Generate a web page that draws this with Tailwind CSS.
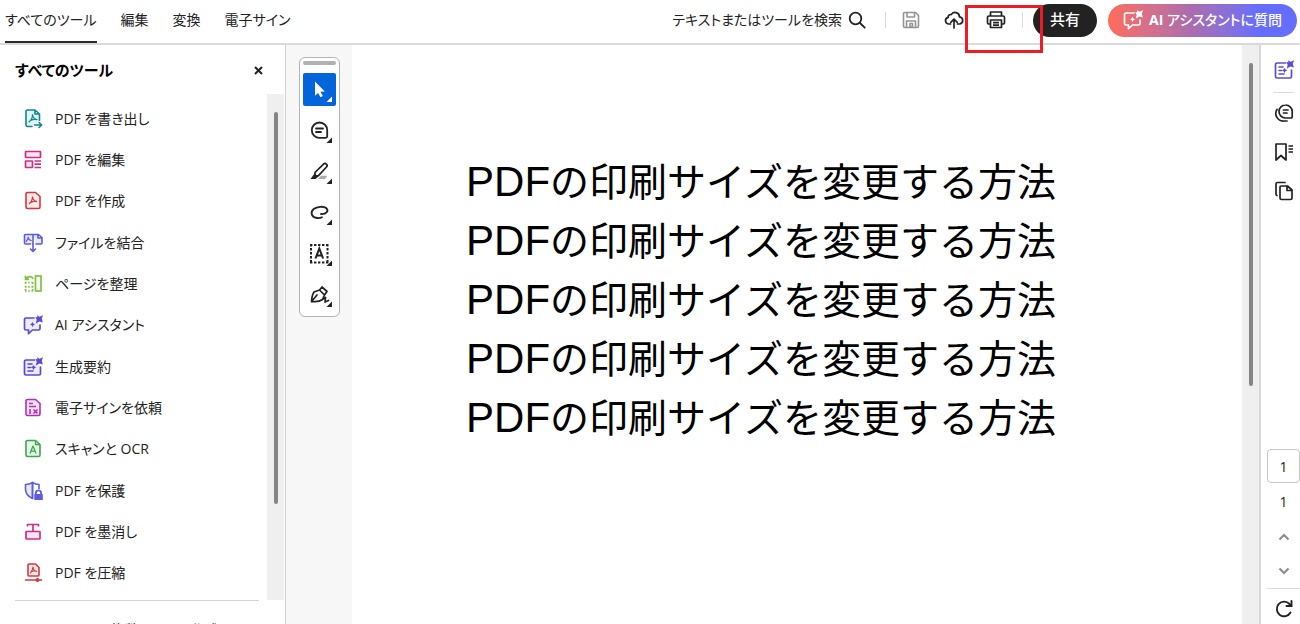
<!DOCTYPE html>
<html lang="ja">
<head>
    <meta charset="UTF-8">
    <meta name="viewport" content="width=device-width, initial-scale=1.0">
    <title>PDFの印刷サイズを変更する方法</title>
    <script src="https://cdn.jsdelivr.net/npm/@tailwindcss/browser@4"></script>
</head>
<body class="h-screen flex flex-col overflow-hidden bg-white text-[#222] text-sm font-['Open_Sans','Noto_Sans_CJK_JP',sans-serif] [font-feature-settings:'palt']">

    <!-- Shared icons -->
    <svg class="hidden">
        <symbol id="i-acro" viewBox="0 0 20 20">
            <path fill="none" stroke="currentColor" stroke-width="1.2" stroke-linejoin="round" d="M9.500 5.500c.2 2.500 1.500 4.500 4.500 5.200M9.500 5.500c0 3-1 5.500-3.500 7.500M7.500 11.500c2-1 4.300-1.300 6.500-.8"/>
        </symbol>
        <symbol id="i-summary" viewBox="0 0 20 20">
            <path fill="var(--tint,none)" stroke="currentColor" stroke-width="1.700" stroke-linecap="round" d="M11.500 3H3a1.500 1.500 0 0 0-1.500 1.500v12A1.500 1.500 0 0 0 3 18h13a1.500 1.500 0 0 0 1.500-1.500V10"/>
            <path fill="none" stroke="currentColor" stroke-width="1.600" stroke-linecap="round" d="M5 7h4M5 10.500h2.500M5 14h5"/>
            <path fill="currentColor" d="M14.200.3l2.300 1.400L20 .2l-1.200 3.500 1 3.800-3.300-1L12.800 8.500l.9-3.800L12.300 2l2 .3zM10.500 8l1 1.500 1.800.8-1.800 1-1 1.700-1-1.700-1.800-1 1.800-.8z"/>
        </symbol>
        <symbol id="i-chat" viewBox="0 0 20 20">
            <path fill="var(--tint,none)" stroke="currentColor" stroke-width="1.700" stroke-linecap="round" stroke-linejoin="round" d="M11 3H3a1.500 1.500 0 0 0-1.500 1.500v9A1.500 1.500 0 0 0 3 15h2.500v3.700L9.500 15H15.500a1.500 1.500 0 0 0 1.500-1.500V10"/>
            <path fill="currentColor" d="M14.200.3l2.300 1.400L20 .2l-1.200 3.500 1 3.800-3.300-1L12.800 8.500l.9-3.800L12.300 2l2 .3zM9.500 7l.9 1.600 1.600.9-1.600.8-.9 1.700-.9-1.700L7 9.500l1.600-.9z"/>
        </symbol>
    </svg>

    <header class="relative flex items-start justify-between h-[45px] shrink-0 border-b-2 border-[#dadada] pl-[5px] pr-[3px]">
        <nav class="flex gap-6 h-full">
            <a href="#" class="border-b-2 border-[#2c2c2c] h-[43px] leading-10">すべてのツール</a>
            <a href="#" class="leading-10">編集</a>
            <a href="#" class="leading-10">変換</a>
            <a href="#" class="leading-10">電子サイン</a>
        </nav>
        <div class="flex items-center h-10">
            <button class="flex items-center gap-[6px]">テキストまたはツールを検索
                <svg class="size-[18px]" viewBox="0 0 18 18" fill="none" stroke="currentColor" stroke-width="1.800" stroke-linecap="round"><circle cx="7.500" cy="7.500" r="5.800"/><path d="M12 12l4.700 4.700"/></svg>
            </button>
            <span class="w-px h-4 bg-[#dadada] ml-[19px] mr-4"></span>
            <button aria-label="保存" class="text-[#959595]">
                <svg class="size-[18px]" viewBox="0 0 18 18" fill="none" stroke="currentColor" stroke-width="1.600" stroke-linejoin="round"><path d="M2.500 1.500h11l3 3v10.500a1.500 1.500 0 0 1-1.500 1.500H3A1.500 1.500 0 0 1 1.500 15V2.500a1 1 0 0 1 1-1z"/><path d="M5 1.500v4.500h7.500V1.500M4.500 16.500V10h9v6.500M8 12.500h2.500v3H8z"/></svg>
            </button>
            <button aria-label="アップロード" class="ml-6">
                <svg class="size-5" viewBox="0 0 20 20" fill="none" stroke="currentColor" stroke-width="1.700" stroke-linecap="round" stroke-linejoin="round"><path d="M6.500 14H4.500a3.400 3.400 0 0 1-.3-6.700 2.400 2.400 0 0 1 3-2.700 4.500 4.500 0 0 1 8.300 2.300 3.600 3.600 0 0 1 .3 7.100H13.500M10 18V9.500M6.800 12.300L10 9l3.200 3.300"/></svg>
            </button>
            <button aria-label="印刷" class="ml-[22px]">
                <svg class="size-5" viewBox="0 0 20 20" fill="none" stroke="currentColor" stroke-width="1.700" stroke-linejoin="round"><path d="M4.500 6V2h11v4M4.500 14H3a1.500 1.500 0 0 1-1.500-1.500v-5A1.500 1.500 0 0 1 3 6h14a1.500 1.500 0 0 1 1.500 1.500v5A1.500 1.500 0 0 1 17 14h-1.500M4.500 10h11v7.500h-11zM7 12.700h6M7 15.200h6"/></svg>
            </button>
            <span class="w-px h-4 bg-[#dadada] ml-4 mr-[10px]"></span>
            <button class="h-[33px] w-16 rounded-full bg-[#222] text-white text-[15px] font-medium">共有</button>
            <button class="flex items-center justify-center gap-[6px] h-[33px] w-[189px] ml-[11px] rounded-full bg-linear-to-r from-[#ff6b58] via-[#a96cb0] via-45% to-[#656dff] to-80% text-white text-sm font-medium">
                <svg class="size-5"><use href="#i-chat"/></svg>
                <span><b>AI</b> アシスタントに質問</span>
            </button>
        </div>
        <!-- Highlight around the print button -->
        <div class="absolute right-[257px] top-[5px] w-[78px] h-12 border-[3px] border-[#ed1c24] z-10"></div>
    </header>

    <div class="flex flex-1 min-h-0">
        <aside class="w-[286px] shrink-0 border-r border-[#d0d0d0] flex flex-col overflow-hidden">
            <div class="flex items-center justify-between h-[49px] shrink-0 pt-[2px] pl-[15px] pr-[22px]">
                <h2 class="text-[15px] font-bold text-black">すべてのツール</h2>
                <button aria-label="閉じる"><svg class="size-[9px]" viewBox="0 0 9 9" stroke="currentColor" stroke-width="2"><path d="M1 1l7 7M8 1L1 8"/></svg></button>
            </div>
            <div class="flex shrink-0">
                <ul class="flex-1 grid auto-rows-fr h-[506px] pt-1 pb-[6px] pl-[23px]">
                    <li class="flex"><a href="#" class="flex items-center gap-3">
                        <svg class="size-5 text-[#12878a]" viewBox="0 0 20 20" fill="none" stroke="currentColor" stroke-width="1.600" stroke-linecap="round" stroke-linejoin="round"><path fill="#e1f3f3" d="M9 17.500H4.500A1.500 1.500 0 0 1 3 16V2.500A1.500 1.500 0 0 1 4.500 1H12l4.500 4v6.500M12 1.500V5h4"/><use href="#i-acro"/><path d="M11.500 16h7M16 13.500l2.700 2.500-2.700 2.500"/></svg>PDF を書き出し</a></li>
                    <li class="flex"><a href="#" class="flex items-center gap-3">
                        <svg class="size-5 text-[#d22d86]" viewBox="0 0 20 20" fill="#fbe6f1" stroke="currentColor" stroke-width="1.700"><rect x="2.500" y="1.500" width="15" height="6" rx=".5"/><rect x="2.500" y="11" width="7" height="6.500" rx=".5"/><path d="M11.500 11h6.500M11.500 14.200h6.500M11.500 17.500h6.500"/></svg>PDF を編集</a></li>
                    <li class="flex"><a href="#" class="flex items-center gap-3">
                        <svg class="size-5 text-[#d7373f]" viewBox="0 0 20 20" fill="none" stroke="currentColor" stroke-width="1.600" stroke-linejoin="round"><path fill="#fdeaea" d="M4.500 1.500h8l4.500 4V16a1.500 1.500 0 0 1-1.500 1.500h-11A1.500 1.500 0 0 1 3 16V3a1.500 1.500 0 0 1 1.500-1.500z"/><use href="#i-acro"/></svg>PDF を作成</a></li>
                    <li class="flex"><a href="#" class="flex items-center gap-3">
                        <svg class="size-5 text-[#5c5ce0]" viewBox="0 0 20 20" fill="none" stroke="currentColor" stroke-width="1.600" stroke-linecap="round" stroke-linejoin="round"><path fill="#e9e9fc" d="M7.500 11H2.500a1 1 0 0 1-1-1V2.500a1 1 0 0 1 1-1H10V11M10 1.500h5.500l3.500 3V10a1 1 0 0 1-1 1h-5M15 1.500V5h4"/><path stroke-width="1.200" d="M5.200 4c.2 2 1.300 3.300 3 3.500M3.300 8.500C4 7 5.500 6 5.200 4"/><path d="M10 11v7.500M7.500 16l2.500 2.500 2.500-2.500"/></svg>ファイルを結合</a></li>
                    <li class="flex"><a href="#" class="flex items-center gap-3">
                        <svg class="size-5 text-[#7cc33f]" viewBox="0 0 20 20" fill="none" stroke="currentColor" stroke-width="1.700"><rect x="12.500" y="2" width="5.500" height="15"/><path d="M10 5C9.500 2.500 6 1.500 3 4.500M2.500 1.500v3.800H6"/><path stroke-dasharray="1.600 1.600" d="M2 8.500h8M2 17h8M2.500 8.500V17M9.700 8.500V17M2 12.800h8"/></svg>ページを整理</a></li>
                    <li class="flex"><a href="#" class="flex items-center gap-3">
                        <svg class="size-5 text-[#5c4bd3] [--tint:#eeebfc]"><use href="#i-chat"/></svg>AI アシスタント</a></li>
                    <li class="flex"><a href="#" class="flex items-center gap-3">
                        <svg class="size-5 text-[#5c4bd3] [--tint:#eeebfc]"><use href="#i-summary"/></svg>生成要約</a></li>
                    <li class="flex"><a href="#" class="flex items-center gap-3">
                        <svg class="size-5 text-[#b52bc1]" viewBox="0 0 20 20" fill="none" stroke="currentColor" stroke-width="1.600" stroke-linejoin="round"><path fill="#f8e6fa" d="M4.500 1.500h8l4.500 4V16a1.500 1.500 0 0 1-1.500 1.500h-11A1.500 1.500 0 0 1 3 16V3a1.500 1.500 0 0 1 1.500-1.500z"/><path d="M6 5.500h4M6 8.500h7M7 11v5M10.500 11.500l4 4M14.500 11.500l-4 4"/></svg>電子サインを依頼</a></li>
                    <li class="flex"><a href="#" class="flex items-center gap-3">
                        <svg class="size-5 text-[#3da74e]" viewBox="0 0 20 20" fill="none" stroke="currentColor" stroke-width="1.600" stroke-linejoin="round"><path fill="#e6f5e8" d="M4.500 1.500h8l4.500 4V16a1.500 1.500 0 0 1-1.500 1.500h-11A1.500 1.500 0 0 1 3 16V3a1.500 1.500 0 0 1 1.500-1.500z"/><path stroke-width="1.300" d="M12.500 1.500V5.500H17M7 14.500l3-7.500 3 7.500M8 12.200h4"/></svg>スキャンと OCR</a></li>
                    <li class="flex"><a href="#" class="flex items-center gap-3">
                        <svg class="size-5 text-[#5c5ce0]" viewBox="0 0 20 20" fill="none" stroke="currentColor" stroke-width="1.600" stroke-linejoin="round"><path fill="#e9e9fc" d="M9.500 17.500C5 15.500 2.500 12 2.500 8V3.500c3 0 5-.7 7-2.200z"/><path d="M9.500 1.300c2 1.500 3.500 2.200 6.500 2.200V8M9.500 1v17"/><path fill="currentColor" stroke="none" d="M12 13v-1a3.500 3.500 0 0 1 7 0v1h.8v6h-8.500v-6zm1.800 0h3.400v-1a1.700 1.700 0 0 0-3.400 0z"/></svg>PDF を保護</a></li>
                    <li class="flex"><a href="#" class="flex items-center gap-3">
                        <svg class="size-5 text-[#d22d86]" viewBox="0 0 20 20" fill="none" stroke="currentColor" stroke-width="1.700" stroke-linejoin="round"><path d="M4.500 4.500V2.500h11v2M10 2.500V9"/><rect x="3" y="9.500" width="14" height="7.500" rx=".5" fill="#fbe6f1"/></svg>PDF を墨消し</a></li>
                    <li class="flex"><a href="#" class="flex items-center gap-3">
                        <svg class="size-5 text-[#d7373f]" viewBox="0 0 20 20" fill="none" stroke="currentColor" stroke-width="1.600" stroke-linecap="round" stroke-linejoin="round"><path fill="#fdeaea" d="M6 1h6.500l3.500 3.500V12a1 1 0 0 1-1 1H6a1 1 0 0 1-1-1V2a1 1 0 0 1 1-1z"/><path stroke-width="1.200" d="M10 4c-.3 2-1 4-2.500 6M10 4c.3 2.500 1.500 4 3.500 4.300M8.500 8.500c1.500-.7 3-1 5-.2"/><path d="M2.500 17h16"/><circle cx="14.500" cy="17" r="2" fill="currentColor" stroke="none"/></svg>PDF を圧縮</a></li>
                </ul>
                <div class="w-[17px] bg-[#efefef] pt-[18px] mr-px flex justify-center items-start"><div class="w-1 h-[392px] rounded-full bg-[#858585]"></div></div>
            </div>
            <div class="ml-[15px] mr-[26px] border-t border-[#d5d5d5] pt-[19px] text-center shrink-0">
                <p class="pl-14 whitespace-nowrap">複数まとめて作成</p>
            </div>
        </aside>

        <div class="w-[66px] shrink-0 bg-[#f7f7f7] pl-[13px] pt-3">
            <div class="w-[41px] h-[260px] border border-[#b4b4b4] rounded-md bg-white flex flex-col items-center pt-[3px]">
                <div class="w-[33px] h-1 rounded-full bg-[#b1b1b1] mb-2 shrink-0"></div>
                <div class="flex flex-col gap-2">
                    <button aria-label="選択" class="size-[33px] rounded-xs bg-[#0265dc] text-white">
                        <svg class="size-[33px]" viewBox="0 0 33 33" fill="currentColor"><path d="M12 8.500v14.200l3-2.800 2.600 4.300 2.200-1.200-2.300-4.200 4.300-.3zM29 23.500V29h-5.500z"/></svg>
                    </button>
                    <button aria-label="コメント" class="size-[33px]">
                        <svg class="size-[33px]" viewBox="0 0 33 33" fill="none" stroke="currentColor" stroke-width="1.800" stroke-linecap="round" stroke-linejoin="round"><path d="M16.500 8.500a7.700 7.700 0 1 0 0 15.400h6a1.700 1.700 0 0 0 1.700-1.700v-6a7.700 7.700 0 0 0-7.700-7.700zM13 14.500h7M13 18h5"/><path fill="currentColor" stroke="none" d="M29 23.500V29h-5.500z"/></svg>
                    </button>
                    <button aria-label="ハイライト" class="size-[33px]">
                        <svg class="size-[33px]" viewBox="0 0 33 33" fill="none" stroke="currentColor" stroke-width="1.700" stroke-linejoin="round"><path fill="#aaa" stroke="none" d="M15 24l3-3.300h6.500L22 24z"/><path d="M12 17.500l8.500-8.300a1.900 1.900 0 0 1 3 2.800L15.500 20.700 12 21z"/><path fill="currentColor" stroke="none" d="M11.500 18.500l4 3L12.500 24H7.500zM29 23.500V29h-5.500z"/></svg>
                    </button>
                    <button aria-label="描画" class="size-[33px]">
                        <svg class="size-[33px]" viewBox="0 0 33 33" fill="none" stroke="currentColor" stroke-width="1.800" stroke-linecap="round"><path d="M18 18c5 .5 8-3 5.500-5.700-3-2.500-9.500-1.800-12.800.7-4 3.500-2 8.500 3.300 9 2.500.2 4-.2 5-.8"/><path fill="currentColor" stroke="none" d="M29 23.500V29h-5.500z"/></svg>
                    </button>
                    <button aria-label="テキスト選択" class="size-[33px]">
                        <svg class="size-[33px]" viewBox="0 0 33 33" fill="none" stroke="currentColor" stroke-width="2"><path stroke-dasharray="2.400 1.600" d="M7 8h18.400M7 25.500h18.400M8 7v18.400M24.500 7v18.400"/><path d="M12.500 21.500l3.800-10 3.800 10M13.700 18.500h5.200"/><path fill="currentColor" stroke="none" d="M29 23.500V29h-5.500z"/></svg>
                    </button>
                    <button aria-label="署名" class="size-[33px]">
                        <svg class="size-[33px]" viewBox="0 0 33 33" fill="none" stroke="currentColor" stroke-width="1.700" stroke-linecap="round" stroke-linejoin="round"><path d="M8.500 23.500c.3-4 1-7.500 2.500-9.500l5.500-2 5 5-2 4.500c-2.500 2-7 2.500-11 2zM16.500 12l2.500-3 5 4.500-2.500 3.500M8.500 23.500l5.500-6.500M18.500 22l4-2.500-.5 4.500 3.500-1.500"/><path fill="currentColor" stroke="none" d="M29 23.500V29h-5.500z"/></svg>
                    </button>
                </div>
            </div>
        </div>

        <main class="flex-1 min-w-0 overflow-hidden flex justify-center pt-[108px] pr-[72px]">
            <div class="text-black text-[39px] leading-[58px] whitespace-nowrap font-['Liberation_Sans','Noto_Sans_CJK_JP',sans-serif] [font-feature-settings:normal]">
                <p><span class="text-[42px]">PDF</span>の印刷サイズを変更する方法</p>
                <p><span class="text-[42px]">PDF</span>の印刷サイズを変更する方法</p>
                <p><span class="text-[42px]">PDF</span>の印刷サイズを変更する方法</p>
                <p><span class="text-[42px]">PDF</span>の印刷サイズを変更する方法</p>
                <p><span class="text-[42px]">PDF</span>の印刷サイズを変更する方法</p>
            </div>
        </main>

        <div class="w-[17px] shrink-0 bg-[#efefef] flex justify-center pt-[18px]"><div class="w-1 h-[323px] rounded-full bg-[#858585]"></div></div>

        <aside class="w-[41px] shrink-0 border-l-2 border-[#d8d8d8] pl-[6px] flex flex-col justify-between overflow-hidden">
            <div class="w-[33px] flex flex-col items-center pt-[15px]">
                <button aria-label="生成要約" class="text-[#5c4bd3]"><svg class="size-5"><use href="#i-summary"/></svg></button>
                <span class="w-[21px] h-px bg-[#dedede] mt-3 mb-[10px]"></span>
                <div class="flex flex-col gap-[19px]">
                    <button aria-label="コメント"><svg class="size-5" viewBox="0 0 20 20" fill="none" stroke="currentColor" stroke-width="1.700" stroke-linecap="round" stroke-linejoin="round"><path d="M11.500 2a6.500 6.500 0 0 0 0 13H17a1.200 1.200 0 0 0 1.200-1.200V8.500A6.500 6.500 0 0 0 11.500 2zM9.500 7h4.500M9.500 10h3.500M3 6.500A7.500 7.500 0 0 0 10 18h3"/></svg></button>
                    <button aria-label="しおり"><svg class="size-5" viewBox="0 0 20 20" fill="none" stroke="currentColor" stroke-width="1.700" stroke-linejoin="round"><path d="M2 2h10v16l-5-4.500L2 18zM14.500 4H19M14.500 7H19M14.500 10H19"/></svg></button>
                    <button aria-label="ページ"><svg class="size-5" viewBox="0 0 20 20" fill="none" stroke="currentColor" stroke-width="1.700" stroke-linecap="round" stroke-linejoin="round"><path d="M7 5h6.500l4.500 4v8a1.500 1.500 0 0 1-1.500 1.500H7.500A1.500 1.500 0 0 1 6 17V6a1 1 0 0 1 1-1zM13 5v4.500h5M3 14.500A1.500 1.500 0 0 1 2 13V3a1.500 1.500 0 0 1 1.500-1.500H11"/></svg></button>
                </div>
            </div>
            <div class="w-[33px] flex flex-col items-center pb-[5px]">
                <input type="text" value="1" aria-label="ページ番号" class="w-[33px] h-[34px] border border-[#c6c6c6] rounded-sm text-center">
                <span class="leading-5 mt-[9px]">1</span>
                <button aria-label="前のページ" class="mt-[21px] text-[#8e8e8e]"><svg class="w-3 h-2" viewBox="0 0 12 8" fill="none" stroke="currentColor" stroke-width="2.200"><path d="M1.500 6.500L6 2l4.500 4.500"/></svg></button>
                <button aria-label="次のページ" class="mt-[26px] text-[#8e8e8e]"><svg class="w-3 h-2" viewBox="0 0 12 8" fill="none" stroke="currentColor" stroke-width="2.200"><path d="M1.500 1.500L6 6l4.500-4.500"/></svg></button>
                <span class="w-full h-px bg-[#dedede] mt-[13px] mb-[10px]"></span>
                <button aria-label="回転"><svg class="size-5" viewBox="0 0 20 20" fill="none" stroke="currentColor" stroke-width="1.900" stroke-linecap="round"><path d="M16.500 13.500A7.300 7.300 0 1 1 15.500 5l1.500 1.500"/><path d="M17.500 2v5h-5"/></svg></button>
            </div>
        </aside>
    </div>
</body>
</html>
